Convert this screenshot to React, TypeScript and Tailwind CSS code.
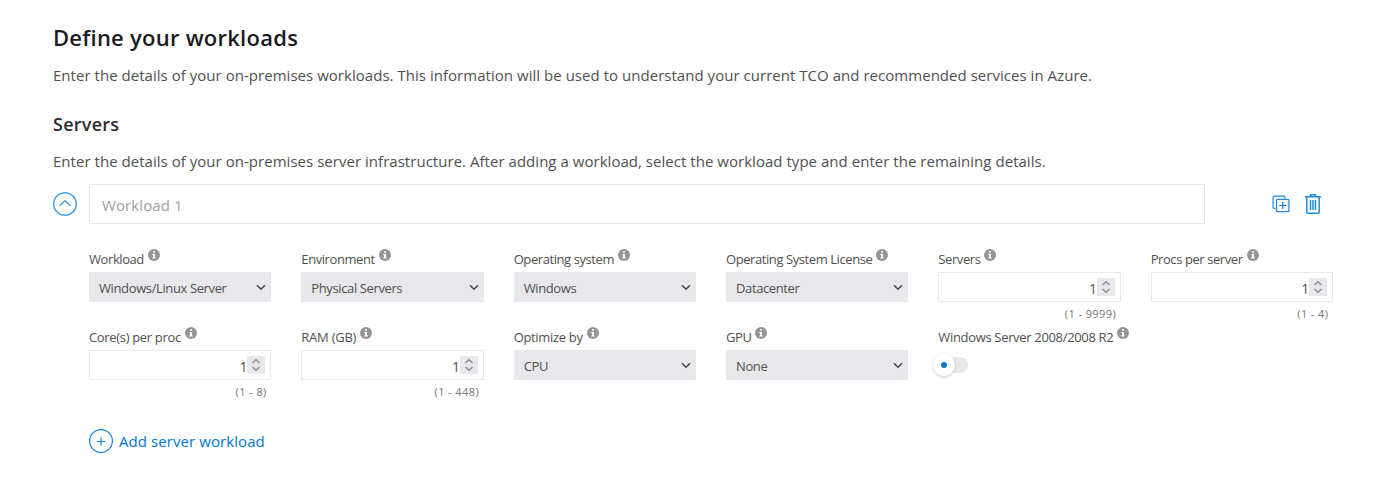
import React from 'react';

function InfoIcon() {
  return (
    <svg className="absolute -right-4 top-[5px] size-3" viewBox="0 0 12 12">
      <circle cx="6" cy="6" r="6" fill="#949494" />
      <path d="M5.1 2.2h1.9v1.6H5.1zM4.3 4.9H7v3.5h.8v1.1H4.2V8.4H5V6h-.7z" fill="#fff" />
    </svg>
  );
}

function Label({ text, className = 'tracking-[-0.42px]' }: { text: string; className?: string }) {
  return (
    <div className="relative -mt-0.5 flex h-7 w-fit items-center whitespace-nowrap pt-1 text-[13px] text-[#505050]">
      <span className={className}>{text}</span>
      <InfoIcon />
    </div>
  );
}

function SelectField({ label, value, labelClass, valueClass = 'tracking-[-0.38px]' }: { label: string; value: string; labelClass?: string; valueClass?: string }) {
  return (
    <div className="h-[78px]">
      <Label text={label} className={labelClass} />
      <div className="flex h-[30px] items-center justify-between bg-[#e8e7ec] pl-[10px] pr-[5px] pt-[3px] text-[13px] text-[#505050]">
        <span className={valueClass}>{value}</span>
        <svg className="relative -top-[1.5px] h-[7px] w-[10px]" viewBox="0 0 10 7" fill="none" stroke="#484850" strokeWidth="1.6">
          <path d="M1 1.2L5 5.2L9 1.2" />
        </svg>
      </div>
    </div>
  );
}

function NumberField({ label, range, labelClass }: { label: string; range: string; labelClass?: string }) {
  return (
    <div className="h-[78px]">
      <Label text={label} className={labelClass} />
      <div className="flex h-[30px] items-center justify-end border border-[#e8e8e8] pr-[5px] text-[13px] text-[#505050]">
        <span className="pt-0.5 text-[14px] tracking-[-0.3px]">1</span>
        <span className="flex size-[18px] items-center justify-center bg-[#e8e7ec]">
          <svg className="h-[14px] w-[10px]" viewBox="0 0 10 14" fill="none" stroke="#8b8b99" strokeWidth="1.4">
            <path d="M1.5 4.9L5 1.7L8.5 4.9M1.5 9.1L5 12.3L8.5 9.1" />
          </svg>
        </span>
      </div>
      <div className="pr-[5px] pt-[3px] text-right text-[11px] leading-[18px] text-[#767676]">
        <span className="-mr-[0.4px] tracking-[0.4px]">{range}</span>
      </div>
    </div>
  );
}

export default function App() {
  return (
    <main className="h-[496px] w-[1387px] overflow-hidden bg-white pl-[53px] pt-[21px] font-['Open_Sans','Noto_Sans',sans-serif] text-[15px] text-[#505050]">
      <h1 className="text-[22px] font-semibold leading-8 tracking-[0.25px] text-[#1b1b1f]">Define your workloads</h1>
      <p className="mt-[10px] leading-6 tracking-[0.033px]">Enter the details of your on-premises workloads. This information will be used to understand your current TCO and recommended services in Azure.</p>
      <h2 className="mt-[25px] text-[18px] font-semibold leading-6 tracking-[0.25px] text-[#2b2b30]">Servers</h2>
      <p className="mt-[13px] leading-6 tracking-[0.033px]">Enter the details of your on-premises server infrastructure. After adding a workload, select the workload type and enter the remaining details.</p>

      <div className="mt-[11px] flex h-10 items-center">
        <button aria-label="Collapse">
          <svg className="size-6" viewBox="0 0 24 24" fill="none" stroke="#479fe2">
            <circle cx="12" cy="12" r="11.3" strokeWidth="1.4" />
            <path d="M6.5 13.8L12 8.7L17.5 13.8" strokeWidth="1.4" />
          </svg>
        </button>
        <input className="ml-3 h-10 w-[1116px] border border-[#e6e6e6] px-3 pt-px tracking-[0.1px] text-[#505050] outline-none placeholder:text-[#a0a0a0]" placeholder="Workload 1" />
        <button aria-label="Duplicate" className="ml-[67px]">
          <svg className="size-[18px]" viewBox="0 0 18 18" fill="none" stroke="#2188dc" strokeWidth="1.2">
            <path d="M3.5 13.4H2.1a1 1 0 0 1-1-1V2.1a1 1 0 0 1 1-1h9.9a1 1 0 0 1 1 1v1.6" />
            <rect x="4.5" y="4.3" width="12.4" height="12.4" rx="1" />
            <path d="M10.7 7v7M7.2 10.5h7" stroke="#0078d4" />
          </svg>
        </button>
        <button aria-label="Delete" className="ml-[15px]">
          <svg className="h-5 w-4" viewBox="0 0 16 20" fill="none" stroke="#2188dc" strokeWidth="1.5">
            <path d="M0 2.8h16M5.5 2.5V.8h5v1.7M1.8 3v15a1.2 1.2 0 0 0 1.2 1.2h10a1.2 1.2 0 0 0 1.2-1.2V3M5.5 6v10M8 6v10M10.5 6v10" />
          </svg>
        </button>
      </div>

      <section className="ml-9 mt-[22px] grid w-[1244px] grid-cols-6 gap-x-[30px]">
        <SelectField label="Workload" value="Windows/Linux Server" />
        <SelectField label="Environment" value="Physical Servers" />
        <SelectField label="Operating system" value="Windows" />
        <SelectField label="Operating System License" value="Datacenter" />
        <NumberField label="Servers" range="(1 - 9999)" />
        <NumberField label="Procs per server" range="(1 - 4)" />
        <NumberField label="Core(s) per proc" range="(1 - 8)" labelClass="tracking-[-0.33px]" />
        <NumberField label="RAM (GB)" range="(1 - 448)" labelClass="tracking-[-0.25px]" />
        <SelectField label="Optimize by" value="CPU" labelClass="tracking-[-0.33px]" />
        <SelectField label="GPU" value="None" />
        <div>
          <Label text="Windows Server 2008/2008 R2" className="tracking-[-0.33px]" />
          <button role="switch" aria-checked="false" className="-ml-[5px] mt-1 flex h-[22px] w-[35px] items-center rounded-full">
            <span className="z-10 flex size-[22px] items-center justify-center rounded-full bg-white shadow-[0_1px_3px_rgba(0,0,0,0.2)]">
              <span className="size-[6px] rounded-full bg-[#0078d4]" />
            </span>
            <span className="-ml-[14px] h-4 w-[27px] rounded-full bg-[#e8e8ea]" />
          </button>
        </div>
      </section>

      <button className="ml-9 mt-[27px] flex h-6 items-center gap-[6px] text-[#0078d4]">
        <svg className="size-6" viewBox="0 0 24 24" fill="none" stroke="#1683d8">
          <circle cx="12" cy="12" r="11.4" strokeWidth="1.2" />
          <path d="M12 8.3v8.4M7.8 12.5h8.4" strokeWidth="1.2" />
        </svg>
        <span className="tracking-[0.08px]">Add server workload</span>
      </button>
    </main>
  );
}
